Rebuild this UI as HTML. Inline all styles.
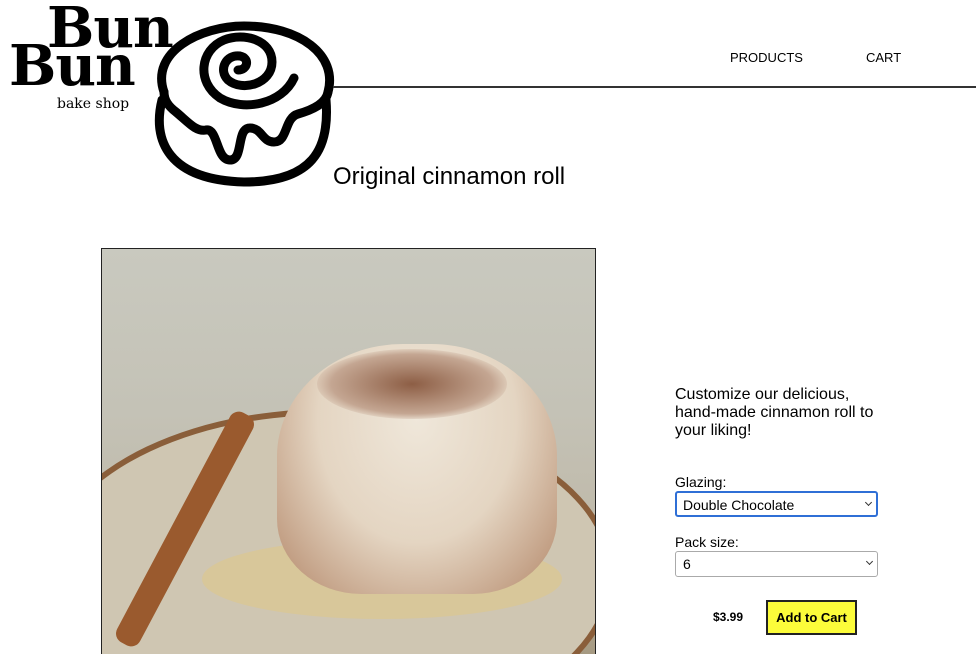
<!DOCTYPE html>
<html><head><style>
html,body{margin:0;width:980px;height:654px;overflow:hidden}
body{background:#fff;font-family:"Liberation Sans",sans-serif;position:relative}
.a{position:absolute}
.logo{font-family:"DejaVu Serif","Liberation Serif",serif;font-weight:bold;color:#000;line-height:1;letter-spacing:-1px}
.sel{position:absolute;left:675px;width:203px;height:24px;border:1px solid #aaa;border-radius:3px;box-sizing:border-box;font-size:14px;padding:4px 0 0 7px}
.sel:after{content:"";position:absolute;right:5px;top:7px;width:4px;height:4px;border-right:1px solid #333;border-bottom:1px solid #333;transform:rotate(45deg)}
</style></head><body>
<div class="a logo" style="left:47px;top:0px;font-size:56px">Bun</div>
<div class="a logo" style="left:9px;top:38px;font-size:56px">Bun</div>
<div class="a" style="left:57px;top:96px;font-family:'DejaVu Serif',serif;font-size:14px">bake shop</div>
<svg class="a" style="left:150px;top:18px" width="190" height="172" viewBox="150 18 190 172">
<g fill="none" stroke="#000" stroke-width="9" stroke-linecap="round" stroke-linejoin="round">
<path d="M164 92 C150 52 200 26 244 26 C300 26 338 55 328 92"/>
<path d="M164 92 C164 100 168 106 176 112 C188 122 196 132 206 130 C218 128 216 160 230 160 C244 160 236 128 250 128 C262 128 262 142 274 142 C288 142 284 118 298 114 C312 110 326 104 328 92"/>
<path d="M162 100 C152 140 168 180 244 182 C312 182 330 150 326 100"/>
<path d="M238 70 C248 70 250 58 240 56 C226 54 218 70 228 80 C242 92 272 84 272 62 C272 40 244 32 224 40 C200 50 196 82 220 98 C244 112 282 104 294 78"/>
</g></svg>
<div class="a" style="left:333px;top:86px;width:643px;height:2px;background:#333"></div>
<div class="a" style="left:730px;top:50px;font-size:13px">PRODUCTS</div>
<div class="a" style="left:866px;top:50px;font-size:13px">CART</div>
<div class="a" style="left:333px;top:163px;font-size:24px">Original cinnamon roll</div>
<div class="a" style="left:101px;top:248px;width:493px;height:406px;border:1px solid #222;border-bottom:none;overflow:hidden;background:linear-gradient(180deg,#c9c9bf 0%,#c4c2b6 40%,#bfb9a9 70%,#a69a82 100%)">
 <div class="a" style="left:-60px;top:160px;width:560px;height:320px;border-radius:50%;background:#cfc6b2;border:6px solid #8a5e3a"></div>
 <div class="a" style="left:70px;top:150px;width:26px;height:260px;background:#9a5a2e;transform:rotate(28deg);border-radius:10px"></div>
 <div class="a" style="left:100px;top:290px;width:360px;height:80px;border-radius:50%;background:#d8c79a"></div>
 <div class="a" style="left:175px;top:95px;width:280px;height:250px;border-radius:45% 45% 30% 30%;background:radial-gradient(ellipse at 50% 30%,#efe7da 0%,#e4d5c2 50%,#b4886a 100%)"></div>
 <div class="a" style="left:215px;top:100px;width:190px;height:70px;border-radius:50%;background:radial-gradient(ellipse,#8d5e45 0%,#c4a692 60%,transparent 75%)"></div>
</div>
<div class="a" style="left:675px;top:386px;font-size:16px;line-height:18px;width:205px">Customize our delicious, hand-made cinnamon roll to your liking!</div>
<div class="a" style="left:675px;top:474px;font-size:14px">Glazing:</div>
<div class="sel" style="top:491px;height:26px;border:2px solid #2f6fd6;padding-top:4px;padding-left:6px">Double Chocolate</div>
<div class="a" style="left:675px;top:534px;font-size:14px">Pack size:</div>
<div class="sel" style="top:551px;height:26px">6</div>
<div class="a" style="left:713px;top:610px;font-size:12px;font-weight:bold">$3.99</div>
<div class="a" style="left:766px;top:600px;width:91px;height:35px;box-sizing:border-box;border:2px solid #222;background:#fcfc3a;font-size:13px;font-weight:bold;text-align:center;line-height:31px">Add to Cart</div>
</body></html>
